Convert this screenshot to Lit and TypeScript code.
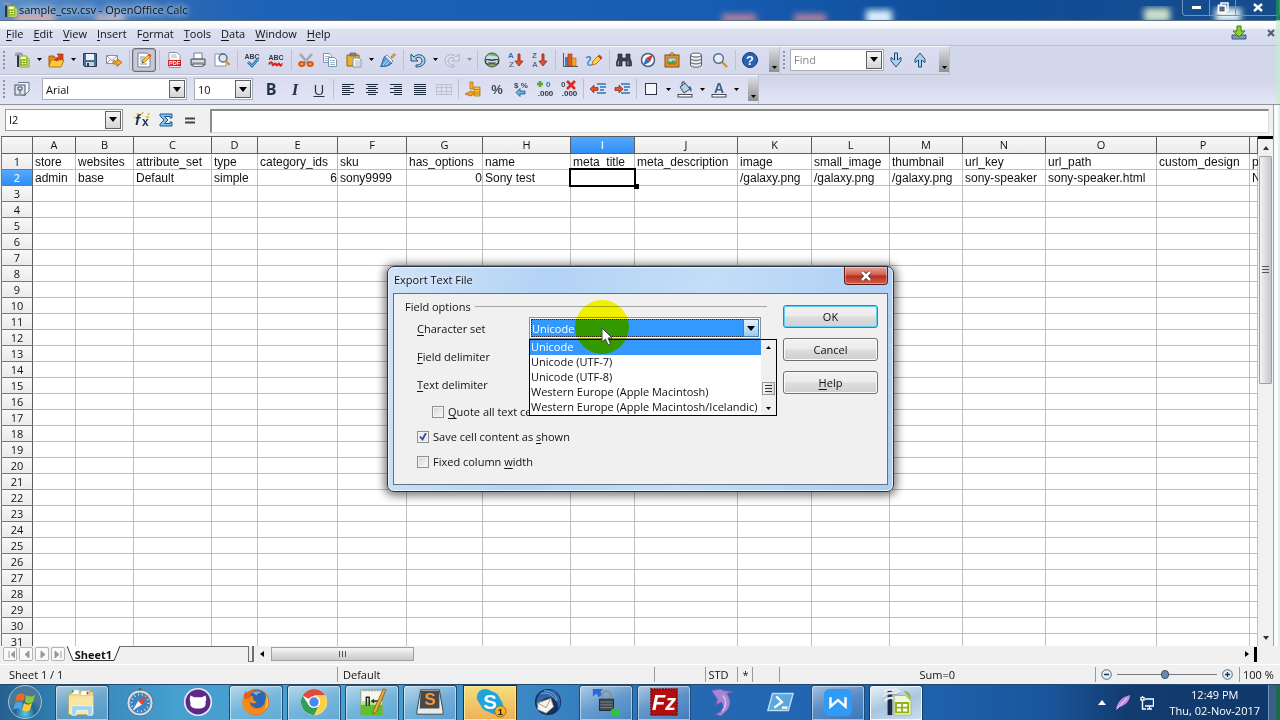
import { LitElement, html, css, svg, nothing } from "lit";
import { customElement, property, state } from "lit/decorators.js";
import { classMap } from "lit/directives/class-map.js";

/* ---------- icon artwork, 16 x 16 unless a size is listed ---------- */
const doc = svg`<path d="M2 1h9l3 3v11H2z" fill="#fff" stroke="#6f7f95"/>`;
const calcSheet = svg`<path d="M3 3h2v12H3z" fill="#26364a"/><path d="M1 4c3-3 5 0 8-2M1 2c3-2 4 0 7-1" stroke="#8d99a6" fill="none" stroke-width="1.3"/><path d="M6 4h6l3 3v8H6z" fill="#f4fad8" stroke="#7f9a22"/><path d="M7 8h6v5H7z" fill="#fff" stroke="#86b010" stroke-width="1.4"/><path d="M7 10.5h6M10 8v5" stroke="#86b010"/><path d="M12 3v4h3z" fill="#9ac520"/>`;
const lines = (xs: number[][]) => xs.map(([x, y, w]) => svg`<rect x=${x} y=${y} width=${w} height="1" fill="#1e2b3c"/>`);

const icons: Record<string, unknown> = {
  calc: calcSheet,
  open: svg`<path d="M1 4h5l1 2h6v8H1z" fill="#e88a10" stroke="#a85c08"/><path d="M3 8h13l-3 7H1z" fill="#ffc93e" stroke="#c07a10"/><path d="M7 8l4-4-2-2h6v6l-2-2-4 3z" fill="#e0401c" stroke="#8e220c" stroke-width=".6"/>`,
  save: svg`<path d="M1.5 1.5h13v13h-12l-1-1z" fill="#4b6d96" stroke="#26415f"/><rect x="4" y="2" width="8" height="6" fill="#eef2f8"/><rect x="4" y="10" width="8" height="4" fill="#c6d2e0"/><rect x="5" y="11" width="2" height="3" fill="#26415f"/>`,
  mail: svg`<path d="M.5 3.500h11v8H.5z" fill="#fff" stroke="#8793a5"/><path d="M.5 3.500l5.500 5 5.500-5M.5 11.500l4-4M11.500 11.500l-4-4" stroke="#8793a5" fill="none"/><path d="M7 9h4V6.500l5 4-5 4V12H7z" fill="#f7a520" stroke="#a86408" stroke-width=".8"/>`,
  edit: svg`${doc}<path d="M4 5h5M4 7h5M4 9h3M4 12h7" stroke="#7f93ad"/><path d="M6 11l1-3 6-6 2 2-6 6z" fill="#ffc22e" stroke="#a4660c" stroke-width=".7"/><path d="M12 3l2 2 1.500-1.500-2-2z" fill="#e24a35"/><path d="M6 11l.5-1.500 1 1z" fill="#222"/>`,
  pdf: svg`<path d="M3 .5h8l3 3v12H3z" fill="#fff" stroke="#8a93a5"/><path d="M5 3h5M5 5h6" stroke="#a9b2c2"/><rect x="2" y="8" width="13" height="6" fill="#d8201c"/><text x="8.500" y="13" font-size="5.500" font-weight="700" text-anchor="middle" fill="#fff">PDF</text>`,
  print: svg`<path d="M4 1h8v6H4z" fill="#fff" stroke="#77818f"/><path d="M1 7h14v6H1z" fill="#a6acb4" stroke="#4c545f"/><path d="M2 8h12v2H2z" fill="#d9dde2"/><path d="M3 12h10v2.500H3z" fill="#e9ecef" stroke="#4c545f" stroke-width=".8"/><path d="M5 11h7v1.200H5z" fill="#50b83c"/>`,
  preview: svg`<path d="M1 2h8l3 3v9H1z" fill="#fff" stroke="#8793a5"/><circle cx="9" cy="6" r="4" fill="#d3e8f6" stroke="#53657a" stroke-width="1.300"/><path d="M12 9l3.500 4" stroke="#d9932c" stroke-width="2.200"/>`,
  spell: svg`<text x="8" y="6.500" font-size="7" font-weight="700" text-anchor="middle" fill="#2c3848">ABC</text><path d="M4 10l4 4 6-7" fill="none" stroke="#2a72ad" stroke-width="2.800"/><path d="M4 10l4 4 6-7" fill="none" stroke="#7cc0ea"/>`,
  auto: svg`<text x="8" y="8" font-size="7" font-weight="700" text-anchor="middle" fill="#2c3848">ABC</text><path d="M1 12.500c1-3 3-3 3.500 0s2-3 3.500 0 2-3 3.500 0 2-1 3 0" fill="none" stroke="#d8201c" stroke-width="2"/>`,
  cut: svg`<path d="M2 2l8 9M14 2l-8 9" stroke="#7e8a98" stroke-width="2"/><path d="M2 2l8 9M14 2l-8 9" stroke="#dfe5ea" stroke-width=".7"/><ellipse cx="3.800" cy="12" rx="2.600" ry="2" fill="#f0a060" stroke="#d85a14" stroke-width="2"/><ellipse cx="12.200" cy="12" rx="2.600" ry="2" fill="#f0a060" stroke="#d85a14" stroke-width="2"/>`,
  copy: svg`<path d="M1.500 1.500h6l2 2v7h-8z" fill="#fff" stroke="#7b93ad"/><path d="M3 4.500h5M3 6.500h5M3 8.500h5" stroke="#9cb4cc"/><path d="M6.500 5.500h6l2 2v7h-8z" fill="#fff" stroke="#7b93ad"/><path d="M8 8.500h5M8 10.500h5M8 12.500h5" stroke="#9cb4cc"/>`,
  paste: svg`<path d="M1 3h12v11H1z" fill="#edb02c" stroke="#96640a"/><path d="M4 1h6v3H4z" fill="#7f8894" stroke="#4c545f" stroke-width=".6"/><path d="M7 6h6l2 2v7H7z" fill="#fff" stroke="#7b93ad"/><path d="M9 9h5M9 11h5M9 13h5" stroke="#9cb4cc"/>`,
  brush: svg`<path d="M11 5l3-3.500 1.500 1.500L12 6z" fill="#f7b52e" stroke="#a8640c" stroke-width=".8"/><path d="M5 4l7 7c-3 3-7 4-11.500 3.500C2.500 12 2 8 5 4z" fill="#4f9ddc" stroke="#1d5286" stroke-width=".8"/><path d="M7 3l6 6-1.500 2L5 4.500z" fill="#eef3f8" stroke="#59708c" stroke-width=".7"/><path d="M3 13l4-5M6 13l3-3.500" stroke="#c4e2f8"/>`,
  undo: svg`<path d="M1 2v7h7L5.500 6.500C9 4 12 6 12 9s-3 4-6 4v2c5 0 9-2 9-6.500C15 3 8 .5 4 5z" fill="#a9d2ee" stroke="#234e74"/>`,
  redo: svg`<path d="M15 2v7H8l2.500-2.500C7 4 4 6 4 9s3 4 6 4v2c-5 0-9-2-9-6.500C1 3 8 .5 12 5z" fill="#dfe3ee" stroke="#aab1c2"/>`,
  link: svg`<circle cx="8" cy="8" r="7" fill="#8cae60" stroke="#3e5a3a"/><path d="M3 4c3-2 6 1 10 0l1 3H2z" fill="#bfe0f5"/><rect x="1.500" y="7.500" width="6" height="4.500" rx="2" fill="#cfd8d4" stroke="#2d3c3a" stroke-width="1.200"/><rect x="8.500" y="7.500" width="6" height="4.500" rx="2" fill="#cfd8d4" stroke="#2d3c3a" stroke-width="1.200"/><path d="M4.500 9.800h7" stroke="#2d3c3a" stroke-width="2.600"/><path d="M4.500 9.800h7" stroke="#fff" stroke-width="1.200"/>`,
  az: svg`<text x="0" y="6" font-size="8" font-weight="700" fill="#2273c4">A</text><text x="1" y="15" font-size="8" font-weight="700" fill="#667082">Z</text><path d="M10 2h2v7h3l-4 5-4-5h3z" fill="#e8502c" stroke="#8c2410" stroke-width=".8"/>`,
  za: svg`<text x="0" y="6" font-size="8" font-weight="700" fill="#2273c4">Z</text><text x="0" y="15" font-size="8" font-weight="700" fill="#667082">A</text><path d="M10 2h2v7h3l-4 5-4-5h3z" fill="#e8502c" stroke="#8c2410" stroke-width=".8"/>`,
  chart: svg`<path d="M1.500 1v13.500H16" fill="none" stroke="#4a5565"/><rect x="3" y="5" width="3" height="9" fill="#3c82c8"/><rect x="6" y="2" width="4" height="12" fill="#e65a1e" stroke="#9c3208" stroke-width=".6"/><rect x="10" y="6" width="4" height="8" fill="#f5a42a" stroke="#a8640c" stroke-width=".6"/>`,
  draw: svg`<path d="M0 6c4-3 6 0 3 3s0 6 4 3" fill="none" stroke="#3a8ad2" stroke-width="1.500"/><path d="M6 13l1-4 5-5 3 3-5 5z" fill="#ffd23e" stroke="#a4660c" stroke-width=".8"/><path d="M12 4l3 3 1.200-1.500L13.500 3z" fill="#e24a35" stroke="#8c2410" stroke-width=".5"/>`,
  find: svg`<path d="M2 2h4v4h4V2h4v4l1.500 4v4H10V9H6v5H.5v-4L2 6z" fill="#39424d" stroke="#1a2026" stroke-width=".6"/><path d="M2.500 9v4M12 9v4" stroke="#98a2ae"/>`,
  compass: svg`<circle cx="8" cy="8" r="6.500" fill="#f6f9fd" stroke="#46607f" stroke-width="1.500"/><path d="M13 2.500L6 6l4 4z" fill="#e0301c"/><path d="M3 13.500L6 6l4 4z" fill="#2c70c0"/>`,
  gallery: svg`<path d="M5 3l3-2.500L11 3" fill="none" stroke="#7b5a20"/><rect x="1" y="3" width="14" height="12" fill="#e49030" stroke="#8c5208"/><rect x="4" y="6" width="8" height="6" fill="#a9dcf6" stroke="#8c5208" stroke-width=".6"/><path d="M4 12V9l3 1 2-2 3 2v2z" fill="#4fa03a"/>`,
  db: svg`<path d="M2.500 3v10c0 3 11 3 11 0V3z" fill="#e6e9ec" stroke="#59626c"/><ellipse cx="8" cy="3" rx="5.500" ry="2" fill="#fafafa" stroke="#59626c"/><path d="M2.500 6.500c0 2.500 11 2.500 11 0M2.500 10c0 2.500 11 2.500 11 0" fill="none" stroke="#59626c"/>`,
  zoom: svg`<path d="M10 10l5 5" stroke="#d9932c" stroke-width="2.400"/><circle cx="6.500" cy="6.500" r="4.800" fill="#e3f1fa" stroke="#566a80" stroke-width="1.400"/>`,
  help: svg`<circle cx="8" cy="8" r="7.500" fill="#2b62b4" stroke="#173e7c"/><text x="8" y="13" font-size="13" font-weight="700" text-anchor="middle" fill="#fff">?</text>`,
  down: svg`<path d="M6.500 1h3v7L13 5.500v3.300L8 15 3 8.800V5.500L6.500 8z" fill="#a9d2ee" stroke="#234e74"/>`,
  up: svg`<path d="M6.500 15h3V8l3.500 2.500V7.200L8 1 3 7.200v3.300L6.500 8z" fill="#a9d2ee" stroke="#234e74"/>`,
  styles: svg`<path d="M4 1.500h11V10l-4 4H8" fill="#f4f6fa" stroke="#68758a"/><rect x="1" y="4" width="10" height="10" fill="#dfe4ec" stroke="#46556b"/><path d="M4 6h4v3H4zM6 9v4" fill="none" stroke="#46556b"/>`,
  left: svg`${lines([[2, 3, 12], [2, 5, 8], [2, 7, 12], [2, 9, 8], [2, 11, 12], [2, 13, 8]])}`,
  center: svg`${lines([[2, 3, 12], [4, 5, 8], [2, 7, 12], [4, 9, 8], [2, 11, 12], [4, 13, 8]])}`,
  right: svg`${lines([[2, 3, 12], [6, 5, 8], [2, 7, 12], [6, 9, 8], [2, 11, 12], [6, 13, 8]])}`,
  justify: svg`${lines([[2, 3, 12], [2, 5, 12], [2, 7, 12], [2, 9, 12], [2, 11, 12], [2, 13, 12]])}`,
  merge: svg`<path d="M.5 3.500h15v10H.5zM.5 6.500h15M.5 10.500h15M5.500 3.500v10M10.500 3.500v10" fill="none" stroke="#bcc1ce"/>`,
  coins: svg`<path d="M5 1h3v7H5z" fill="#f5b530" stroke="#a8640c" stroke-width=".7"/><path d="M0 13l6-3 4 2-4 3z" fill="#f0a020" stroke="#a8640c" stroke-width=".7"/><path d="M9 6h6v9H9z" fill="#ffc83c" stroke="#a8640c" stroke-width=".7"/><path d="M9 8.500h6M9 11h6M9 13h6" stroke="#a8640c" stroke-width=".7"/>`,
  percent: svg`<text x="8" y="13" font-size="13" font-weight="700" text-anchor="middle" fill="#39485c">%</text>`,
  std: svg`<text x="8" y="7" font-size="8" font-weight="700" text-anchor="middle" fill="#39485c">$ %</text><path d="M3 11.500l4-4V10h5v3H7v2.500z" fill="#6cb4e6" stroke="#1d5286" stroke-width=".8"/>`,
  addDec: svg`<path d="M3 0v6M0 3h6" stroke="#5aa82c" stroke-width="2.600"/><text x="9" y="6" font-size="8" font-weight="700" fill="#2273c4">0</text><text x="8.500" y="15" font-size="8" font-weight="700" text-anchor="middle" fill="#2c3848">.000</text>`,
  delDec: svg`<text x="0" y="6" font-size="8" font-weight="700" fill="#39485c">0</text><text x="8.500" y="15" font-size="8" font-weight="700" text-anchor="middle" fill="#2c3848">.000</text><path d="M6 0l8 8M14 0L6 8" stroke="#dc2a20" stroke-width="2.600"/>`,
  indentOut: svg`<path d="M7 3h9M10 6h6M10 9h4M7 12h9" stroke="#2e77b8" stroke-width="1.500"/><path d="M0 8l4-4v2.500h4v3H4V12z" fill="#e8502c" stroke="#8c2410" stroke-width=".7"/>`,
  indentIn: svg`<path d="M7 3h9M10 6h6M10 9h4M7 12h9" stroke="#2e77b8" stroke-width="1.500"/><path d="M9 8L5 4v2.500H1v3h4V12z" fill="#e8502c" stroke="#8c2410" stroke-width=".7"/>`,
  border: svg`<rect x="2.500" y="2.500" width="11" height="11" fill="#f4f5fb" stroke="#2c3848"/>`,
  fill: svg`<path d="M3 6l5-4 5 6-6 4z" fill="#b9cfe2" stroke="#34495f"/><path d="M5 5V1h3" fill="none" stroke="#34495f"/><path d="M12 5c3 1 3 4 2 6l-2-3z" fill="#2c6aa6"/><rect x="1" y="13.500" width="14" height="2.500" fill="#fff" stroke="#222" stroke-width=".8"/>`,
  color: svg`<text x="8" y="11.500" font-size="14" font-weight="700" text-anchor="middle" fill="#3d6285">A</text><rect x="1" y="13.500" width="14" height="2.500" fill="#fff" stroke="#222" stroke-width=".8"/>`,
  fx: svg`<path d="M3 3l1-2M8 2l1-2M1 5h-1M14 3l1-2M12 5h3" stroke="#e8b020" stroke-width="1.500"/><text x="1" y="13" font-size="15" font-style="italic" font-weight="700" fill="#24364c">f</text><text x="8" y="14" font-size="12" font-weight="700" fill="#24364c">x</text>`,
  sum: svg`<path d="M2 2h12v4h-2V4.500H6.500L10 8l-3.500 3.500H12V10h2v4H2v-2l4-4-4-4z" fill="#7ec2ee" stroke="#1d5a90"/>`,
  equals: svg`<path d="M3 6.500h10M3 10.500h10" stroke="#3f444a" stroke-width="2"/>`,
  update: svg`<path d="M1 10h14v4H1z" fill="#7b98b8" stroke="#3c5878"/><path d="M6 1h4v5h4l-6 6-6-6h4z" fill="#8fd02c" stroke="#3f7a10"/>`,
};

const appIcons: Record<string, unknown> = {
  explorer: svg`<path d="M2 7h10l2-2h14v24H2z" fill="#f0d987" stroke="#c9a646"/><path d="M5 3h8v5H5zM15 4h9v5h-9z" fill="#fff" stroke="#cdb568" stroke-width=".6"/><path d="M5 3h2v3H5z" fill="#37a04a"/><path d="M21 5h2v3h-2z" fill="#d23a2c"/><path d="M2 10h26v19H2z" fill="#f8e7a4"/><path d="M5 30V20h22v10h-5v-5H10v5z" fill="#9fd4f2" stroke="#e9f6fd"/>`,
  safari: svg`<circle cx="16" cy="17" r="12.500" fill="#3f83c0" stroke="#d6dce2" stroke-width="2.500"/><circle cx="16" cy="17" r="14" fill="none" stroke="#59636e" stroke-width=".7"/><circle cx="16" cy="17" r="9" fill="none" stroke="#d5e8f7" stroke-dasharray="1 3" stroke-width="2"/><path d="M24 9l-10 6 4 4z" fill="#e8452c"/><path d="M8 25l6-10 4 4z" fill="#f3f6f9"/><circle cx="16" cy="2.500" r="1.500" fill="#555d66"/>`,
  github: svg`<circle cx="16" cy="16" r="15" fill="#f0ebf4"/><circle cx="16" cy="16" r="13.300" fill="#5c2a86"/><path d="M8 9l4 2h8l4-2c1 4 1 5 0 7 1 5-2 7-8 7s-9-2-8-7c-1-2-1-3 0-7z" fill="#fff"/>`,
  firefox: svg`<circle cx="16" cy="16" r="14" fill="#e8641a"/><circle cx="18" cy="13" r="9.500" fill="#2a67b4"/><path d="M12 6c3-2 7-2 10 0-3 0-5 1-5 3z" fill="#6fb2e4"/><path d="M20 3c6 2 10 7 9 14-1-3-2-4-3-5 0 8-5 12-11 11-4-1-6-4-5-7 2 2 5 2 7 0-3-1-5-3-4-6-3 0-6-2-8-3-5 6-5 14 1 19s17 5 21-2 3-18-7-21z" fill="#f28a1c"/><path d="M26 8c3 3 4 8 2 13l-3 3c3-6 3-10 1-16z" fill="#ffd23c"/><path d="M3 9l2-5 2 4 4 1-2 3-5 1z" fill="#e85c14"/>`,
  chrome: svg`<circle cx="16" cy="16" r="14" fill="#fff"/><path d="M16 16L3.900 9A14 14 0 0 1 28.100 9H16z" fill="#dd4b3e"/><path d="M16 16V9h12.100A14 14 0 0 1 16 30L22 18z" fill="#fcd04b"/><path d="M16 16l-5.500 3.500L3.900 9A14 14 0 0 0 16 30L21.500 19z" fill="#2fa156"/><circle cx="16" cy="16" r="6.500" fill="#fff"/><circle cx="16" cy="16" r="5" fill="#4a88f0"/>`,
  npp: svg`<path d="M4 3h23v27H4z" fill="#f4f8ee" stroke="#8a9a7c"/><path d="M4 18h23v12H4z" fill="#5fbf2c"/><path d="M4 15h23v4H4z" fill="#bfe39c"/><path d="M6 4h19" stroke="#8a8f96" stroke-dasharray="2 1"/><path d="M10 20v-9h3v9M15 15h5M17.500 13v4M20 15h4" fill="none" stroke="#222b22" stroke-width="1.600"/><path d="M17 26L28 2l3 1-10 23-4 3z" fill="#e7a640" stroke="#7c5414" stroke-width=".8"/>`,
  sublime: svg`<path d="M6 3h20l4 23v3H2v-3z" fill="#e8eaec" stroke="#3a3e44"/><path d="M6 4h20v19H5z" fill="#47494c"/><text x="16" y="19" font-size="18" font-weight="700" text-anchor="middle" fill="#f59a3a">S</text>`,
  skype: svg`<circle cx="11" cy="11" r="9" fill="#1ea4e0"/><circle cx="21" cy="20" r="9" fill="#1ea4e0"/><circle cx="16" cy="15.500" r="11" fill="#1ea4e0"/><text x="16" y="23" font-size="22" font-weight="700" text-anchor="middle" fill="#fff">S</text><circle cx="27" cy="26" r="6" fill="#f7b21e" stroke="#9a6408"/><text x="27" y="30" font-size="10" font-weight="700" text-anchor="middle" fill="#222">1</text>`,
  bird: svg`<circle cx="16" cy="16" r="14" fill="#15305e"/><path d="M4 20C2 8 12 1 22 4c7 4 9 13 5 20 0-8-3-12-9-13-6 0-10 4-14 9z" fill="#2f66a8"/><path d="M12 4c6 0 12 3 14 10M8 7c7-2 13 1 17 8" fill="none" stroke="#7fb4e0"/><path d="M5 17l14-5 3 9-8 7-9-4z" fill="#f7f4ee" stroke="#8d8880" stroke-width=".8"/><path d="M5 17l9 5 5-10" fill="none" stroke="#9a958c"/>`,
  lock: svg`<path d="M2 2h11l-3 3 2 3-4 3-2-4-4 3z" fill="#2b68d8"/><path d="M12 13V9c0-6 9-6 9 0v4" fill="none" stroke="#8d949b" stroke-width="2.600"/><rect x="9" y="13" width="15" height="12" fill="#44494e" stroke="#24282c"/><path d="M10 16h13M10 19h13M10 22h13" stroke="#7c8288"/><path d="M31 31H20l3-3-2-3 4-3 2 4 4-3z" fill="#2fc82c"/>`,
  fz: svg`<rect x="2" y="2" width="28" height="28" fill="#b30d0d" stroke="#7c0606" stroke-dasharray="2 1" stroke-width="1.500"/><text x="16" y="24" font-size="23" font-style="italic" font-weight="700" text-anchor="middle" fill="#fff">Fz</text>`,
  dolphin: svg`<path d="M5 3c4 2 7-3 13 1l10 1-7 2c5 6 5 15-2 20l-4 4-6-2 5-2c4-4 4-9 1-11l-5 3 1-6C9 9 6 7 5 3z" fill="#a487d4" stroke="#7a5cb4"/><path d="M17 9c4 5 4 12-1 17" fill="none" stroke="#d8c4ee" stroke-width="1.500"/>`,
  ps: svg`<path d="M8 7h22l-5 18H3z" fill="#5aa9dc" stroke="#b9dcf2" stroke-width="1.500"/><path d="M12 10l6 6-8 6M18 22h6" fill="none" stroke="#fff" stroke-width="2.500"/>`,
  wps: svg`<rect x="1" y="2" width="30" height="29" rx="6" fill="#2f9bf5"/><path d="M8 11v10l8-7 8 7V11" fill="none" stroke="#fff" stroke-width="2.600"/>`,
  calc: svg`<path d="M7 3h5v27H7z" fill="#1d2c3c"/><path d="M2 11c8-9 12-1 19-7M3 5c6-5 10 0 15-3M4 15c6-7 10-1 14-3" fill="none" stroke="#e6ebef" stroke-width="2.600"/><path d="M2 12.500c8-9 12-1 19-7" fill="none" stroke="#8a96a2" stroke-width=".8"/><path d="M14 9h12l6 6v15H14z" fill="#f2f6dc" stroke="#a9b574"/><path d="M24 4c5 0 8 4 8 9z" fill="#8dbb1c"/><path d="M16 17h13v10H16z" fill="#fff" stroke="#8fb414" stroke-width="2"/><path d="M16 22h13M22.500 17v10" stroke="#8fb414" stroke-width="2"/>`,
};

const icon = (name: string) => html`<svg class="ic" viewBox="0 0 16 16" aria-hidden="true">${icons[name]}</svg>`;
const appIcon = (name: string) => html`<svg class="app" viewBox="0 0 32 32" aria-hidden="true">${appIcons[name]}</svg>`;

/* underlines the access key of a label */
const key = (text: string, at = 0) => html`${text.slice(0, at)}<u>${text[at]}</u>${text.slice(at + 1)}`;

const base = css`
  * { box-sizing: border-box; }
  button, input, select { font: inherit; color: inherit; margin: 0; padding: 0; border: 0; background: none; border-radius: 0; }
  button { display: flex; align-items: center; justify-content: center; }
  .ic { width: 16px; height: 16px; display: block; overflow: visible; }
  .ic text, .app text { font-family: "Liberation Sans", sans-serif; }
  u { text-underline-offset: 2px; }
`;

@customElement("combo-box")
class ComboBox extends LitElement {
  @property() value = "";
  @property() label = "";
  @property() placeholder = "";
  static styles = [base, css`
    :host { display: flex; height: 22px; background: #fff; border: 1px solid #a9adb8; }
    .field { flex: 1; min-width: 0; padding-left: 3px; outline: 0; }
    .field::placeholder { color: #85888e; opacity: 1; }
    .drop { width: 16px; background: linear-gradient(#f7f7f7, #d5d5d5); border: 1px solid #5e6268; margin: 1px; }
  `];
  render() {
    return html`<input class="field" aria-label=${this.label} placeholder=${this.placeholder} .value=${this.value} />
      <button class="drop" aria-label="Open ${this.label}"><svg width="8" height="5"><path d="M0 0h8L4 5z" /></svg></button>`;
  }
}

type Tool = string;
const SEP = "|", ARROW = "v", DIM = "-";

@customElement("tool-strip")
class ToolStrip extends LitElement {
  @property({ attribute: false }) tools: Tool[] = [];
  @property() active = "";
  static styles = [base, css`
    :host { display: flex; align-items: center; }
    .tool { width: 24px; height: 24px; }
    .active { border: 1px solid #6a6e7a; border-radius: 3px; background: #c9cbd6; box-shadow: inset 0 0 2px #777; }
    .arrow { width: 10px; height: 24px; }
    .dim { opacity: .35; }
    .sep { width: var(--sep, 6px); height: 20px; display: flex; justify-content: center; }
    .sep::before { content: ""; width: 1px; background: #bcc0cf; }
    .b { font: 700 16px/1 "Open Sans", sans-serif; color: #26344a; }
    .i { font: italic 700 17px/1 "Liberation Serif", serif; color: #26344a; }
    .u { font: 15px/1 "Open Sans", sans-serif; color: #26344a; text-decoration: underline; }
  `];
  render() {
    return this.tools.map((t) => {
      if (t === SEP) return html`<span class="sep"></span>`;
      if (t === ARROW || t === DIM)
        return html`<button class=${classMap({ arrow: true, dim: t === DIM })} aria-label="More"><svg width="5" height="3"><path d="M0 0h5L2.500 3z" /></svg></button>`;
      if (t.length === 1) return html`<button class="tool ${t.toLowerCase()}">${t}</button>`;
      return html`<button class=${classMap({ tool: true, active: t === this.active })} aria-label=${t}>${icon(t)}</button>`;
    });
  }
}

/* the last column takes whatever width is left */
const COLUMNS: [string, number][] = [
  ["A", 43], ["B", 58], ["C", 78], ["D", 46], ["E", 80], ["F", 69], ["G", 76], ["H", 88], ["I", 64],
  ["J", 103], ["K", 74], ["L", 78], ["M", 73], ["N", 83], ["O", 111], ["P", 93], ["", 0],
];
const DATA: string[][] = [
  ["store", "websites", "attribute_set", "type", "category_ids", "sku", "has_options", "name", "meta_title", "meta_description", "image", "small_image", "thumbnail", "url_key", "url_path", "custom_design", "p"],
  ["admin", "base", "Default", "simple", "6", "sony9999", "0", "Sony test", "", "", "/galaxy.png", "/galaxy.png", "/galaxy.png", "sony-speaker", "sony-speaker.html", "", "N"],
];

@customElement("sheet-grid")
class SheetGrid extends LitElement {
  @state() row = 2;
  @state() col = 8;
  static styles = [base, css`
    :host { display: block; overflow: hidden; background: #fff; border-top: 1px solid #55585c; border-left: 1px solid #77797c; }
    .grid { table-layout: fixed; border-spacing: 0; width: 100%; }
    .rows { width: 31px; }
    th, td { padding: 0; height: 16px; line-height: 15px; white-space: nowrap; }
    th { font-weight: 400; background: linear-gradient(#f8f8f8, #ebebed); border-right: 1px solid #5c5e62; border-bottom: 1px solid #77797c; font-size: 11px; text-align: center; }
    thead th { height: 17px; line-height: 16px; border-bottom-color: #5c5e62; }
    td { font: 12px/14px "Liberation Sans", sans-serif; padding: 1px 0 0 2px; border-right: 1px solid #bfbfbf; border-bottom: 1px solid #bfbfbf; }
    .num { text-align: right; }
    .on { background: linear-gradient(#55a9ff, #2f8ff5); color: #e3f1ff; font-weight: 600; }
    .cursor { position: relative; }
    .cursor::before { content: ""; position: absolute; inset: -2px; border: 2px solid #000; }
    .cursor::after { content: ""; position: absolute; right: -5px; bottom: -4px; width: 5px; height: 5px; background: #000; }
  `];
  render() {
    return html`<table class="grid">
      <colgroup><col class="rows" />${COLUMNS.map(([, w]) => (w ? html`<col style="width:${w}px" />` : html`<col />`))}</colgroup>
      <thead><tr><th></th>${COLUMNS.map(([n], c) => html`<th class=${classMap({ on: c === this.col })}>${n}</th>`)}</tr></thead>
      <tbody>${Array.from({ length: 31 }, (_, r) => html`<tr>
        <th class=${classMap({ on: r + 1 === this.row })}>${r + 1}</th>
        ${COLUMNS.map((_c, c) => {
          const v = DATA[r]?.[c] ?? "";
          return html`<td class=${classMap({ num: /^\d+$/.test(v), cursor: r + 1 === this.row && c === this.col })}>${v || nothing}</td>`;
        })}</tr>`)}</tbody>
    </table>`;
  }
}

const CHARSETS = ["Unicode", "Unicode (UTF-7)", "Unicode (UTF-8)", "Western Europe (Apple Macintosh)", "Western Europe (Apple Macintosh/Icelandic)"];

@customElement("export-dialog")
class ExportDialog extends LitElement {
  @state() charset = 0;
  static styles = [base, css`
    :host { display: flex; flex-direction: column; width: 507px; padding: 0 5px 6px; border: 1px solid #27313d; border-radius: 7px;
      background: linear-gradient(100deg, #cfe3f8, #b3d3f5 30%, #c4ddf8 60%, #a9cdf3);
      box-shadow: inset 0 0 0 1px #eaf5ff, 0 1px 8px 3px rgba(0,0,0,.5); }
    .title { display: flex; justify-content: space-between; height: 26px; padding-left: 1px; }
    .name { margin: 0; font-size: 11px; font-weight: 400; line-height: 25px; text-shadow: 0 0 6px #fff; }
    .close { width: 44px; height: 18px; border: 1px solid #5d1c18; border-top: 0; border-radius: 0 0 4px 4px; background: linear-gradient(#e8a598, #cf5a48 48%, #b62c1c 52%, #d0604c); box-shadow: inset 0 0 0 1px rgba(255,255,255,.35); }
    .body { display: flex; justify-content: space-between; background: #f0f0f0; border: 1px solid #5d7187; padding: 5px 9px 10px 11px; }
    .fields { width: 362px; border: 0; padding: 0; margin: 0; min-width: 0; }
    .legend { display: flex; align-items: center; gap: 4px; height: 15px; padding: 0; width: 100%; }
    .legend::after { content: ""; flex: 1; height: 1px; background: #a5a5a5; }
    .row { display: flex; align-items: center; height: 28px; padding-left: 12px; }
    .label { width: 112px; }
    .pick { position: relative; width: 232px; height: 22px; border: 1px solid #8d9298; background: #fff; padding: 1px; }
    .select { appearance: none; width: 100%; height: 100%; display: block; outline: 0; padding-left: 1px; }
    .select.hot { background: #3399ff; color: #fff; outline: 1px dotted #223; outline-offset: -1px; }
    .caret { position: absolute; right: 1px; top: 1px; width: 16px; height: 18px; background: linear-gradient(#e4f3fc, #98cdec); border: 1px solid #3c7fb1; display: flex; align-items: center; justify-content: center; pointer-events: none; }
    .popup { position: absolute; z-index: 1; left: -1px; top: 21px; width: 248px; display: flex; border: 1px solid #000; background: #fff; }
    .list { flex: 1; list-style: none; margin: 0; padding: 0; }
    .opt { height: 15px; line-height: 14px; padding-left: 1px; white-space: nowrap; }
    .opt.sel { background: #3399ff; color: #fff; }
    .bar { width: 15px; background: #f0f0f0; display: flex; flex-direction: column; align-items: center; padding: 6px 0 5px; }
    .thumb { margin: auto 0 12px; width: 13px; height: 13px; border: 1px solid #989898; background: linear-gradient(90deg, #f6f6f6, #d6d6d6); display: flex; align-items: center; justify-content: center; }
    .check { display: flex; align-items: center; gap: 4px; height: 25px; padding-left: 12px; }
    .check.first { padding-left: 27px; margin-top: 1px; }
    .box { appearance: none; width: 12px; height: 12px; border: 1px solid #8e8f8f; background: linear-gradient(135deg, #cfd3d8, #fbfbfb); box-shadow: inset 0 0 0 1px #f4f4f4; }
    .box:checked { background: url("data:image/svg+xml,%3Csvg xmlns='http://www.w3.org/2000/svg' viewBox='0 0 10 10'%3E%3Cpath d='M2 4.500l2.500 3L8 1' fill='none' stroke='%23384a9a' stroke-width='1.800'/%3E%3C/svg%3E") #e9ecf0; }
    .actions { display: flex; flex-direction: column; gap: 10px; padding-top: 6px; }
    .btn { width: 95px; height: 23px; border: 1px solid #707070; border-radius: 3px; background: linear-gradient(#f2f2f2, #ebebeb 48%, #dddddd 52%, #cfcfcf); box-shadow: inset 0 0 0 1px #fbfbfb; }
    .btn.default { border-color: #3c7fb1; box-shadow: inset 0 0 0 1px #5fd0f5; }
  `];
  render() {
    return html`
      <header class="title"><h2 class="name">Export Text File</h2>
        <button class="close" aria-label="Close"><svg width="12" height="10"><path d="M2 1l8 8M10 1L2 9" stroke="#5a2420" stroke-width="4" /><path d="M2 1l8 8M10 1L2 9" stroke="#fff" stroke-width="2.500" /></svg></button></header>
      <div class="body">
        <fieldset class="fields">
          <legend class="legend">Field options</legend>
          <div class="row"><label class="label" for="cs">${key("Character set")}</label>
            <div class="pick">
              <select class="select hot" id="cs"><option>${CHARSETS[this.charset]}</option></select>
              <span class="caret"><svg width="8" height="5"><path d="M0 0h8L4 5z" /></svg></span>
              <div class="popup">
                <ul class="list" role="listbox" aria-label="Character set">${CHARSETS.map((c, i) => html`<li role="option" aria-selected=${i === this.charset} class=${classMap({ opt: true, sel: i === this.charset })} @click=${() => (this.charset = i)}>${c}</li>`)}</ul>
                <div class="bar"><svg width="5" height="3"><path d="M0 3h5L2.500 0z" /></svg>
                  <span class="thumb"><svg width="7" height="7"><path d="M0 .5h7M0 3.500h7M0 6.500h7" stroke="#333" /></svg></span>
                  <svg width="5" height="3"><path d="M0 0h5L2.500 3z" /></svg></div>
              </div>
            </div></div>
          <div class="row"><label class="label" for="fd">${key("Field delimiter")}</label><div class="pick"><select class="select" id="fd"></select></div></div>
          <div class="row"><label class="label" for="td">${key("Text delimiter")}</label><div class="pick"><select class="select" id="td"></select></div></div>
          <div class="check first"><input class="box" type="checkbox" id="q" /><label for="q">${key("Quote all text cells")}</label></div>
          <div class="check"><input class="box" type="checkbox" id="s" checked /><label for="s">${key("Save cell content as shown", 21)}</label></div>
          <div class="check"><input class="box" type="checkbox" id="w" /><label for="w">${key("Fixed column width", 13)}</label></div>
        </fieldset>
        <div class="actions"><button class="btn default">OK</button><button class="btn">Cancel</button><button class="btn"><span>${key("Help")}</span></button></div>
      </div>`;
  }
}

const TASKS: [string, string][][] = [
  [["explorer", "open"], ["safari", ""], ["github", ""], ["firefox", "open"], ["chrome", "open"], ["npp", "open"], ["sublime", "open"]],
  [["skype", "alert"], ["bird", ""], ["lock", "open"], ["fz", "open"], ["dolphin", ""], ["ps", ""], ["wps", "open"], ["calc", "current"]],
];

@customElement("task-bar")
class TaskBar extends LitElement {
  static styles = [base, css`
    :host { display: flex; align-items: stretch; height: 36px; padding-left: 4px; overflow: hidden; color: #fff; border-top: 1px solid #24496e;
      background: linear-gradient(90deg, #24608f, #2f7db0 4%, #46a0d0 14%, #4a9dcf 30%, #3a86c4 42%, #2568b2 55%, #1e62ae 72%, #1a559b 82%, #123c70 88%, #10386a); }
    .start { width: 41px; margin-right: 10px; }
    .group { display: flex; gap: 4px; margin-right: 6px; }
    .task { width: 54px; border: 1px solid transparent; border-bottom: 0; padding-bottom: 2px; }
    .open { border-color: #1c4a74; border-radius: 3px 3px 0 0; background: linear-gradient(160deg, rgba(255,255,255,.6), rgba(255,255,255,.25) 50%, rgba(255,255,255,.12)); box-shadow: inset 0 0 0 1px rgba(255,255,255,.5); }
    .alert { border-color: #3a2c10; background: linear-gradient(#f3e07c, #eeb055); box-shadow: inset 0 0 0 1px #fbe9a0; }
    .current { border-color: #163a60; border-radius: 3px 3px 0 0; background: linear-gradient(160deg, #e9f1f8, #a9c6e0 50%, #c9dcee); box-shadow: inset 0 0 0 1px #f2f8fd; }
    .app { width: 30px; height: 30px; overflow: visible; }
    .tray { margin-left: auto; display: flex; align-items: center; gap: 10px; }
    .clock { display: flex; flex-direction: column; align-items: center; line-height: 16px; font-size: 11px; white-space: nowrap; margin: 0 8px 0 6px; }
    .show { width: 12px; align-self: stretch; margin-left: -10px; border-left: 1px solid #7796b8; background: linear-gradient(90deg, #375f88 60%, #1c6a4c 60%); }
  `];
  render() {
    return html`
      <button class="start" aria-label="Start"><svg width="36" height="35" viewBox="0 0 36 35">
        <defs><radialGradient id="orb" cy=".85"><stop offset="0" stop-color="#5cc8f0" /><stop offset=".6" stop-color="#23648f" /><stop offset="1" stop-color="#4a7898" /></radialGradient></defs>
        <circle cx="18" cy="17" r="16.500" fill="url(#orb)" stroke="#9fc4da" />
        <path d="M10 10c3-2 5-2 8 0l-2 7c-3-2-5-2-8 0z" fill="#ec6a2c" /><path d="M19 10c3 2 6 2 9 0l-2 7c-3 2-5 2-8 0z" fill="#8cc63e" />
        <path d="M8 18c3-2 5-2 8 0l-2 7c-3-2-5-2-8 0z" fill="#4aa4e4" /><path d="M17 18c3 2 5 2 8 0l-2 7c-3 2-5 2-8 0z" fill="#fdca35" /></svg></button>
      ${TASKS.map((g) => html`<div class="group">${g.map(([n, k]) => html`<button class="task ${k}" aria-label=${n}>${appIcon(n)}</button>`)}</div>`)}
      <div class="tray">
        <svg width="8" height="5"><path d="M0 5h8L4 0z" fill="#fff" /></svg>
        <svg width="14" height="16"><path d="M0 15C1 7 6 2 14 0c0 6-5 11-11 12z" fill="#c08ae0" /><path d="M1 14L11 3" stroke="#f0dcfa" /></svg>
        <svg width="14" height="14"><path d="M5 3h8.500v7H5M7 13h5M9.500 10v3M2.500 5v8H6M1 1v3h3V1M2.500 0v2" fill="none" stroke="#fff" stroke-width="1.400" /></svg>
        <div class="clock"><time>12:49 PM</time><time>Thu, 02-Nov-2017</time></div>
        <button class="show" aria-label="Show desktop"></button>
      </div>`;
  }
}

const MENUS: [string, number][] = [["File", 0], ["Edit", 0], ["View", 0], ["Insert", 0], ["Format", 1], ["Tools", 0], ["Data", 0], ["Window", 0], ["Help", 0]];
const STANDARD = ["calc", ARROW, "open", ARROW, "save", "mail", SEP, "edit", SEP, "pdf", "print", "preview", SEP, "spell", "auto", SEP, "cut", "copy", "paste", ARROW, "brush", SEP,
  "undo", ARROW, "redo", DIM, SEP, "link", "az", "za", SEP, "chart", "draw", SEP, "find", "compass", "gallery", "db", "zoom", SEP, "help"];
const FORMATTING = ["B", "I", "U", SEP, "left", "center", "right", "justify", "merge", SEP, "coins", "percent", "std", "addDec", "delDec", SEP, "indentOut", "indentIn", SEP,
  "border", ARROW, "fill", ARROW, "color", ARROW];
const NAV = ["M3 1v7M9 1L5 4.500 9 8z", "M7 1L3 4.500 7 8z", "M3 1l4 3.500L3 8z", "M1 1l4 3.500L1 8zM7 1v7"];

@customElement("app-root")
class AppRoot extends LitElement {
  static styles = [base, css`
    :host { position: relative; display: flex; flex-direction: column; height: 100vh; overflow: hidden; font: 11px/15px "Open Sans", "Noto Sans", sans-serif; color: #111; background: #f0f0f0; }
    .titlebar { position: relative; display: flex; align-items: center; height: 20px; flex: none; padding-left: 2px; gap: 1px; overflow: hidden; background: linear-gradient(90deg, #5b8fc8, #2a68b4 14%, #1b62b8 22%, #175db4 55%, #0f4d98 75%, #164c8c); }
    .caption { font-size: 11px; font-weight: 400; margin: 0; line-height: 20px; text-shadow: 0 0 5px #cfe2f6, 0 0 8px #cfe2f6, 0 0 12px #cfe2f6; }
    .blobs { position: absolute; inset: 0; width: 100%; height: 100%; }
    .titlebar > .ic, .caption { position: relative; }
    .winctl { position: relative; margin-left: auto; align-self: flex-start; display: flex; height: 16px; border: 1px solid #6f94bd; border-top: 0; border-radius: 0 0 4px 4px; }
    .winctl button { width: 26px; }
    .winctl .x { width: 44px; }
    .winctl button + button { border-left: 1px solid #6f94bd; }
    .menubar { display: flex; align-items: center; flex: none; height: 26px; padding: 0 5px 0 6px; gap: 10px; border-top: 1px solid #5b6f88; border-bottom: 1px solid #bcc0ce; background: linear-gradient(#fff, #f5f7fc 30%, #dce1f1 34%, #d4daee); }
    .menubar .last { margin-left: auto; display: flex; gap: 20px; }
    .bars { flex: none; background: linear-gradient(#d2d7ea, #d2d6e9 60%, #e4e7f6); border-bottom: 1px solid #8e939f; }
    .bar { display: flex; align-items: center; width: max-content; height: 29px; padding-bottom: 2px; border-top: 1px solid #f6f8fd; border-right: 1px solid #bcc0ce; border-bottom: 1px solid #bcc0ce; background: linear-gradient(#dadeef, #d3d7ea); }
    .line { display: flex; }
    .bar.tight { --sep: 5px; background: linear-gradient(#d8dcee, #e2e5f5); border-bottom: 0; }
    .grip { width: 10px; height: 20px; background: radial-gradient(circle, #8f94a4 1px, transparent 1px) 2px 0 / 4px 4px repeat-y; }
    .more { width: 10px; height: 24px; margin: 0 0 0 7px; align-items: flex-end; padding-bottom: 3px; background: linear-gradient(#dcdde2, #8f9196); }
    .family { width: 145px; margin: 0 7px 0 8px; }
    .size { width: 59px; margin-right: 6px; }
    .search { width: 94px; }
    .formula { display: flex; align-items: center; flex: none; height: 31px; padding-left: 5px; }
    .ref { width: 118px; margin-right: 7px; border-color: #999; }
    .formula > .ref, .formula > tool-strip { margin-bottom: 2px; }
    .input { flex: 1; height: 24px; margin: 0 4px 0 8px; background: #fff; border: 2px solid #8b8b8b; border-width: 2px 1px 1px 2px; border-right-color: #ddd; border-bottom-color: #ddd; padding: 0 4px; }
    .work { flex: 1; min-height: 0; display: flex; padding-left: 1px; }
    .sheet { flex: 1; min-width: 0; }
    .vscroll { width: 15px; display: flex; flex-direction: column; align-items: center; border-top: 3px solid #000; background: #f1f1f1; padding: 7px 0 6px; gap: 6px; }
    .vthumb { width: 13px; height: 228px; margin-bottom: auto; border: 1px solid #a0a0a0; border-radius: 1px; background: linear-gradient(90deg, #f5f5f5, #dcdcde 50%, #c6c6ca); display: flex; align-items: center; justify-content: center; }
    .edge { width: 7px; align-self: stretch; background: linear-gradient(90deg, #9aa5ad 1px, #f4fafa 1px, #fff 4px, #d5ecec); }
    .tint { position: absolute; right: 0; top: 0; width: 4px; height: 104px; background: linear-gradient(#1c9a4a 20px, #c6edce 20px); opacity: .7; pointer-events: none; }
    .tabs { display: flex; flex: none; height: 18px; align-items: center; padding: 0 0 2px 3px; }
    .nav { display: flex; gap: 2px; margin-right: 2px; }
    .nav button { width: 14px; height: 14px; border: 1px solid #b4b4b4; border-radius: 2px; background: #fafafa; }
    .tab { position: relative; height: 16px; width: 53px; font-weight: 700; }
    .tab svg { position: absolute; inset: 0; }
    .tab span { position: relative; }
    .rail { align-self: stretch; flex: none; width: 128px; border-top: 1px solid #6f6f6f; }
    .split { width: 6px; height: 16px; border: 1px solid #6f6f6f; border-top: 0; border-right-width: 2px; margin-right: 6px; }
    .hthumb { width: 143px; height: 14px; margin: 0 auto 0 7px; border: 1px solid #a0a0a0; background: linear-gradient(#f8f8f8, #dedede 50%, #cacaca); display: flex; align-items: center; justify-content: center; }
    .end { width: 3px; height: 15px; margin: 0 23px 0 5px; background: #000; }
    .status { display: grid; grid-template-columns: 337px 1fr 51px 32px 15px 27px 1fr 144px 41px; flex: none; height: 20px; align-items: center; padding-bottom: 1px; border-top: 1px solid #fff; }
    .status > * { height: 15px; padding-left: 5px; border-left: 1px solid #9a9a9a; white-space: nowrap; }
    .status > :first-child { border: 0; padding-left: 9px; }
    .status > .std, .status > .pct { padding-left: 3px; }
    .status > .sum { text-align: center; padding: 0; }
    .zoomer { display: flex; align-items: center; gap: 5px; }
    .slider { appearance: none; width: 100px; height: 11px; background: linear-gradient(#77797c, #77797c) center / 100% 1px no-repeat; }
    .slider::-webkit-slider-thumb { appearance: none; width: 8px; height: 9px; border-radius: 4px; background: #6b8ba8; border: 1px solid #34506c; }
    .dialog { position: absolute; left: calc(50% - 253px); top: calc(50% - 94px); }
    .halo { position: absolute; z-index: 2; left: calc(50% - 65px); top: calc(50% - 60px); width: 54px; height: 54px; border-radius: 50%; background: #ffff00; mix-blend-mode: multiply; pointer-events: none; }
    .pointer { position: absolute; z-index: 3; left: calc(50% - 39px); top: calc(50% - 33px); pointer-events: none; }
  `];
  private more = html`<button class="more" aria-label="Toolbar options"><svg width="5" height="3"><path d="M0 0h5L2.500 3z" /></svg></button>`;
  render() {
    return html`
      <header class="titlebar">
        <svg class="blobs" aria-hidden="true"><defs><filter id="soft"><feGaussianBlur stdDeviation="3" /></filter></defs><g filter="url(#soft)">
          <rect x="15" y="15" width="40" height="8" fill="#f3a7a0" /><rect x="95" y="15" width="30" height="6" fill="#e8c0b8" />
          <rect x="722" y="14" width="34" height="9" fill="#b8809c" /><rect x="794" y="14" width="32" height="9" fill="#b8809c" />
          <rect x="866" y="10" width="26" height="14" fill="#d9eefa" /><rect x="1144" y="8" width="26" height="14" fill="#cfe0c8" /><rect x="1215" y="8" width="26" height="14" fill="#e5f2f6" /></g></svg>
        ${icon("calc")}<h1 class="caption">sample_csv.csv - OpenOffice Calc</h1>
        <div class="winctl">
          <button aria-label="Minimize"><svg width="11" height="5"><path d="M.5.5h10v4H.5z" fill="#fff" stroke="#445" /></svg></button>
          <button aria-label="Restore"><svg width="12" height="12"><path d="M4 1h7v7H4z" fill="none" stroke="#fff" stroke-width="1.500" /><path d="M1.500 3.500h7v7h-7z" fill="#567" stroke="#fff" stroke-width="1.800" /></svg></button>
          <button class="x" aria-label="Close"><svg width="10" height="9"><path d="M1 1l8 7M9 1L1 8" stroke="#fff" stroke-width="2.400" /></svg></button>
        </div>
      </header>
      <nav class="menubar">${MENUS.map(([m, i]) => html`<button><span>${key(m, i)}</span></button>`)}
        <span class="last"><button aria-label="Update">${icon("update")}</button><button aria-label="Close document"><svg width="8" height="8"><path d="M1 1l6 6M7 1L1 7" stroke="#555b68" stroke-width="2" /></svg></button></span></nav>
      <div class="bars">
        <div class="line">
          <div class="bar"><span class="grip"></span><tool-strip .tools=${STANDARD} active="edit"></tool-strip>${this.more}</div>
          <div class="bar"><span class="grip"></span><combo-box class="search" label="Find" placeholder="Find"></combo-box><tool-strip .tools=${["down", "up"]}></tool-strip>${this.more}</div>
        </div>
        <div class="bar tight"><span class="grip"></span><tool-strip .tools=${["styles"]}></tool-strip><combo-box class="family" label="Font" value="Arial"></combo-box><combo-box class="size" label="Size" value="10"></combo-box><tool-strip .tools=${FORMATTING}></tool-strip>${this.more}</div>
      </div>
      <div class="formula"><combo-box class="ref" label="Cell" value="I2"></combo-box><tool-strip .tools=${["fx", "sum", "equals"]}></tool-strip><input class="input" aria-label="Formula" /><div class="edge"></div></div>
      <main class="work"><sheet-grid class="sheet"></sheet-grid>
        <div class="vscroll"><svg width="6" height="4"><path d="M0 4h6L3 0z" fill="#333" /></svg><span class="vthumb"><svg width="7" height="8"><path d="M0 .5h7M0 3.500h7M0 6.500h7" stroke="#555" /></svg></span><svg width="6" height="4"><path d="M0 0h6L3 4z" fill="#333" /></svg></div>
        <div class="edge"></div></main>
      <div class="tabs"><div class="nav">${NAV.map((d) => html`<button aria-label="Move between sheets"><svg width="9" height="9"><path d=${d} fill="#999" stroke="#999" /></svg></button>`)}</div>
        <button class="tab"><svg width="53" height="16"><path d="M0 0l6 14.500h41L53 0" fill="#fff" stroke="#333" /></svg><span>Sheet1</span></button>
        <span class="rail"></span><span class="split"></span>
        <svg width="4" height="6"><path d="M4 0v6L0 3z" /></svg>
        <span class="hthumb"><svg width="8" height="6"><path d="M.5 0v6M3.500 0v6M6.500 0v6" stroke="#555" /></svg></span>
        <svg width="4" height="6"><path d="M0 0v6l4-3z" /></svg><span class="end"></span></div>
      <footer class="status"><span>Sheet 1 / 1</span><span>Default</span><span></span><span class="std">STD</span><span>*</span><span></span><span class="sum">Sum=0</span>
        <span class="zoomer"><button aria-label="Zoom out"><svg width="11" height="11"><circle cx="5.500" cy="5.500" r="4.800" fill="#e3eff9" stroke="#486a8c" /><path d="M3 5.500h5" stroke="#234" stroke-width="1.500" /></svg></button><input class="slider" type="range" aria-label="Zoom" value="48" /><button aria-label="Zoom in"><svg width="11" height="11"><circle cx="5.500" cy="5.500" r="4.800" fill="#e3eff9" stroke="#486a8c" /><path d="M3 5.500h5M5.500 3v5" stroke="#234" stroke-width="1.300" /></svg></button></span>
        <span class="pct">100 %</span></footer>
      <task-bar></task-bar>
      <span class="tint"></span>
      <export-dialog class="dialog" role="dialog" aria-label="Export Text File"></export-dialog>
      <span class="halo"></span>
      <svg class="pointer" width="12" height="19"><path d="M1 1v14l3.500-3 2.500 6 2.500-1-2.500-6H11z" fill="#fff" stroke="#445" /></svg>`;
  }
}
